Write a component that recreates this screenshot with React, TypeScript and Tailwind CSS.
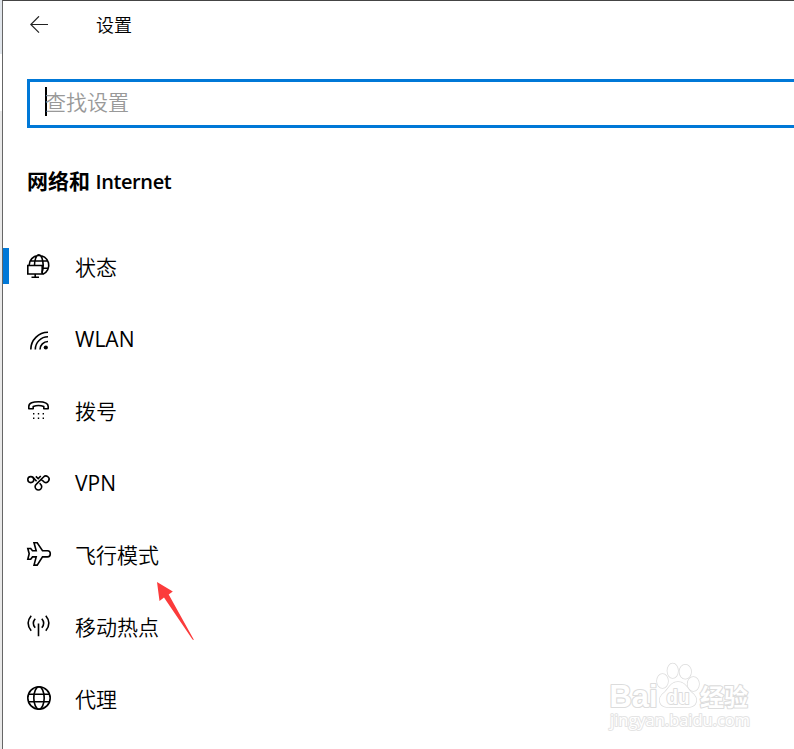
import type { ReactNode } from 'react'

function Icon({ children }: { children: ReactNode }) {
  return (
    <svg
      className="size-6 shrink-0 overflow-visible"
      viewBox="0 0 24 24"
      fill="none"
      stroke="currentColor"
      strokeWidth="1.6"
    >
      {children}
    </svg>
  )
}

const navItems = [
  {
    label: '状态',
    active: true,
    icon: (
      <Icon>
        <path d="M2.200 11A9.800 9.800 0 1 1 15.800 20.300M7.500 11.500C7.500 6 9.300 .8 11.800 .8s4.400 5 4.400 10.500c0 3-.4 5.500-1.400 7.500M3.500 7h17M16 14.200h5.500" />
        <path d="M.8 11.500h14.400v8.500H.8zM8.200 20v3M4.500 23.200h7.500" />
      </Icon>
    ),
  },
  {
    label: 'WLAN',
    latin: true,
    icon: (
      <Icon>
        <path d="M3.800 23.500A17.200 17.200 0 0 1 21 6.300M8.300 23.500A12.700 12.700 0 0 1 21 10.800M13 23.500A8 8 0 0 1 21 15.500" />
        <circle cx="18.800" cy="21.500" r="2.100" fill="currentColor" stroke="none" />
      </Icon>
    ),
  },
  {
    label: '拨号',
    icon: (
      <Icon>
        <path d="M1.800 10.700V8.500C1.800 5 6 3.800 11.500 3.800s9.700 1.200 9.700 4.700v2.200h-4.400V8.600c-3-1.200-7.600-1.200-10.600 0v2.100z" strokeLinejoin="round" />
        <path d="M6 15.800h1.400M10.800 15.800h1.400M15.600 15.800h1.400M6 20.300h1.400M10.800 20.300h1.400M15.600 20.300h1.400" strokeWidth="1.400" />
      </Icon>
    ),
  },
  {
    label: 'VPN',
    latin: true,
    icon: (
      <Icon>
        <circle cx="3.800" cy="9.600" r="3" />
        <path d="M5.900 7.400L9.600 11.300M17 11.800A3.200 3.200 0 1 0 16.500 7L9.200 14.300A3.300 3.300 0 1 0 13.600 14.300L12.600 13.200M14.500 9.500L17 11.800M8.800 6.300L11.200 8.600L13.800 6" />
      </Icon>
    ),
  },
  {
    label: '飞行模式',
    icon: (
      <Icon>
        <path
          d="M7 .8h3.200l5.300 7.900h5c1.600 0 2.800 1.300 2.800 3.100s-1.200 3.100-2.800 3.100h-5l-5.300 8.200H7l2.200-8.200H5.500L3.700 17.200H.8l1.400-5.400L.8 6.500h2.900l1.800 2.200h3.700z"
        />
      </Icon>
    ),
  },
  {
    label: '移动热点',
    icon: (
      <Icon>
        <path d="M11.500 9.500v12.800M8.200 4.800q-3.800 4.500 0 9M14.800 4.800q3.800 4.500 0 9M4.200 1.800q-6.200 7.500 0 15M18.800 1.800q6.200 7.500 0 15" />
      </Icon>
    ),
  },
  {
    label: '代理',
    icon: (
      <Icon>
        <circle cx="12" cy="12" r="11.200" />
        <ellipse cx="12" cy="12" rx="5.200" ry="11.200" />
        <path d="M2 8.300h20M2 15.800h20" />
      </Icon>
    ),
  },
]

function Watermark() {
  return (
    <svg
      className="absolute top-[655px] left-[600px] h-[84px] w-[160px]"
      viewBox="600 655 160 84"
      fill="#fff"
      stroke="#dcdcdc"
      strokeWidth="2.200"
      paintOrder="stroke"
      strokeLinejoin="round"
    >
      <g strokeWidth="1.500">
        <ellipse cx="662.500" cy="681" rx="5.500" ry="7" />
        <ellipse cx="672.700" cy="670.800" rx="5.300" ry="7.300" />
        <ellipse cx="685.300" cy="671.800" rx="5.800" ry="7" />
        <ellipse cx="693.300" cy="684" rx="5.700" ry="7" />
        <path d="M678 682c-7 0-9 6-13 10-4 3-6 6-5 10 2 7 11 5 18 5s16 2 18-5c1-4-1-7-5-10-4-4-6-10-13-10z" />
      </g>
      <g className="font-['Liberation_Sans'] font-bold">
        <text x="609.500" y="707" fontSize="31" textLength="48" lengthAdjust="spacingAndGlyphs">
          Bai
        </text>
        <text x="666.500" y="704" fontSize="20" textLength="23" lengthAdjust="spacingAndGlyphs" strokeWidth="2">
          du
        </text>
      </g>
      <text x="700" y="705.500" fontSize="24" className="font-['Noto_Sans_CJK_SC'] font-bold">
        经验
      </text>
      <text
        x="610"
        y="726"
        fontSize="16"
        textLength="140"
        lengthAdjust="spacingAndGlyphs"
        className="font-['Open_Sans']"
        stroke="#e4e4e4"
        strokeWidth="2"
      >
        jingyan.baidu.com
      </text>
    </svg>
  )
}

export default function App() {
  return (
    <div className="relative flex h-[749px] w-[794px] overflow-hidden bg-white font-['Open_Sans','Noto_Sans_CJK_SC',sans-serif] text-black">
      {/* Edge of the window behind */}
      <div className="flex w-0.5 shrink-0 flex-col">
        <div className="h-[54px] bg-[#e1e6ec]" />
        <div className="h-[57px] bg-white" />
        <div className="flex-1 bg-[#e9e9e9]" />
      </div>

      <main className="min-w-0 flex-1 border-t border-l border-t-[#444] border-l-[#666]">
        <header className="flex h-12 items-center pl-[27px]">
          <svg
            className="h-[18px] w-[18px]"
            viewBox="0 0 18 18"
            fill="none"
            stroke="#222"
            strokeWidth="1.200"
          >
            <path d="M18 8.500H.8M9 .3L.8 8.500L9 16.700" />
          </svg>
          <h1 className="ml-12 text-[18px] leading-6 font-[350]">设置</h1>
        </header>

        {/* Search */}
        <div className="mt-[30px] ml-6 flex h-[49px] items-center border-[3px] border-r-0 border-[#0078d7] pl-[15px]">
          <span className="mb-1 h-[29px] w-0.5 bg-black" />
          <span className="-ml-0.5 mb-1 text-[21px] leading-7 font-[350] text-[#999]">查找设置</span>
        </div>

        <h2 className="mt-[39px] ml-6 h-7 text-[21px] leading-7 font-bold">
          网络和 <span className="text-[20px] font-semibold tracking-[-0.4px]">Internet</span>
        </h2>

        <nav className="mt-[35px]">
          {navItems.map((item) => (
            <div key={item.label} className="flex h-[72px] items-center">
              <div className={item.active ? 'h-9 w-1.5 bg-[#0078d7]' : 'h-9 w-1.5'} />
              <div className="ml-[18px]">{item.icon}</div>
              <span
                className={
                  item.latin
                    ? 'mt-0.5 ml-6 text-[21px] leading-7'
                    : 'mt-px ml-6 text-[21px] leading-7 font-[350]'
                }
              >
                {item.label}
              </span>
            </div>
          ))}
        </nav>
      </main>

      {/* Pointer to the airplane mode entry */}
      <svg className="absolute top-[580px] left-[155px] h-[62px] w-[42px]" viewBox="155 580 42 62">
        <path d="M157 582L172.800 591.500L168.700 594.500L194 640L192.500 639.500L164 597.500L159.500 601z" fill="#fb3b3b" />
      </svg>

      <Watermark />
    </div>
  )
}
